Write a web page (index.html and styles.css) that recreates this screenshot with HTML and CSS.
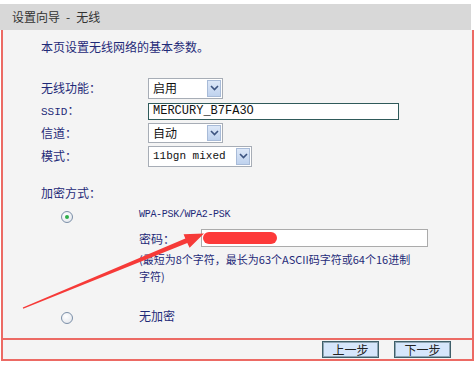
FILE: index.html
```html
<!DOCTYPE html>
<html lang="zh-CN">
<head>
    <meta charset="UTF-8">
    <meta name="viewport" content="width=device-width, initial-scale=1.0">
    <title>设置向导 - 无线</title>
    <link rel="stylesheet" href="styles.css">
</head>
<body>
    <div class="page">
        <div class="title">设置向导&ensp;-&ensp;无线</div>
        <div class="panel">
            <div class="panel-body">
                <p class="intro">本页设置无线网络的基本参数。</p>
                <div class="fields">
                    <div class="field row-a">
                        <label>无线功能：</label>
                        <div class="select sel-short"><span class="val">启用</span><span class="drop"><svg width="9" height="6" viewBox="0 0 9 6"><path d="M1 1 L4.5 4.5 L8 1" fill="none" stroke="#3d5480" stroke-width="1.6"/></svg></span></div>
                    </div>
                    <div class="field row-b">
                        <label><span class="latin">SSID</span>：</label>
                        <div class="text-input mono">MERCURY_B7FA3O</div>
                    </div>
                    <div class="field row-b">
                        <label>信道：</label>
                        <div class="select sel-short sel-low"><span class="val">自动</span><span class="drop"><svg width="9" height="6" viewBox="0 0 9 6"><path d="M1 1 L4.5 4.5 L8 1" fill="none" stroke="#3d5480" stroke-width="1.6"/></svg></span></div>
                    </div>
                    <div class="field row-a">
                        <label>模式：</label>
                        <div class="select sel-long"><span class="val mono small">11bgn mixed</span><span class="drop"><svg width="9" height="6" viewBox="0 0 9 6"><path d="M1 1 L4.5 4.5 L8 1" fill="none" stroke="#3d5480" stroke-width="1.6"/></svg></span></div>
                    </div>
                </div>

                <div class="enc-title">加密方式：</div>

                <div class="option opt-wpa">
                    <span class="radio checked"></span>
                    <div class="option-main">
                        <div class="mode-name">WPA-PSK/WPA2-PSK</div>
                        <div class="pwd-row">
                            <label>密码：</label>
                            <div class="pwd-box"><span class="redact"></span></div>
                        </div>
                        <p class="hint">(最短为8个字符，最长为63个ASCII码字符或64个16进制<br>字符)</p>
                    </div>
                </div>

                <div class="option opt-none">
                    <span class="radio"></span>
                    <div class="option-label">无加密</div>
                </div>
            </div>
            <div class="panel-foot">
                <button class="btn">上一步</button>
                <button class="btn">下一步</button>
            </div>
        </div>

        <!-- red annotation arrow drawn over the form -->
        <svg class="annot" width="476" height="368" viewBox="0 0 476 368">
            <polygon points="22.8,307.5 185.3,238.5 183.6,234.3 204,233.6 189.6,247.8 187.3,243.1 23.2,308.8" fill="#f63a38"/>
        </svg>
    </div>
</body>
</html>
```

FILE: styles.css
```css
body {
    margin: 0;
    padding: 0;
    background: #fff;
    font-family: "Noto Sans CJK SC", "Liberation Sans", sans-serif;
    font-size: 12px;
    color: #1f2a78;
}
.page {
    position: relative;
    width: 476px;
    height: 368px;
    padding-top: 4px;
    box-sizing: border-box;
}
.title {
    width: 459px;
    height: 26px;
    line-height: 25px;
    padding-left: 12px;
    background: #d8d8d8;
    color: #333;
}
.panel {
    width: 469px;
    margin-left: 1px;
    background: #f4f4f4;
    border: 2px solid #ec6a64;
    border-top: none;
}
.panel-body {
    height: 308px;
    padding-left: 38px;
    border-bottom: 2px solid #ec6a64;
}
.intro {
    margin: 0;
    padding-top: 9px;
    line-height: 16px;
}
.fields {
    margin-top: 21px;
}
.field {
    display: flex;
    align-items: center;
}
.row-a {
    height: 24px;
}
.row-b {
    height: 22px;
}
.field label {
    width: 107px;
    line-height: 16px;
}
.latin {
    font-family: "Liberation Mono", monospace;
    font-size: 11px;
}
.mono {
    font-family: "Liberation Mono", monospace;
    color: #111;
}
.select {
    display: flex;
    align-items: stretch;
    height: 21px;
    box-sizing: border-box;
    background: #fff;
    border: 1px solid #a7adb6;
}
.sel-low {
    height: 20px;
}
.sel-short {
    width: 75px;
}
.sel-long {
    width: 104px;
}
.select .val {
    flex: 1;
    padding-left: 4px;
    line-height: 18px;
    color: #111;
}
.select .small {
    font-size: 11px;
}
.drop {
    width: 14px;
    margin: 1px;
    display: flex;
    align-items: center;
    justify-content: center;
    background: linear-gradient(#dde8f8, #bfd2ee);
    border: 1px solid #a8bbd8;
    box-sizing: border-box;
}
.text-input {
    width: 251px;
    height: 17px;
    box-sizing: border-box;
    padding-left: 4px;
    line-height: 15px;
    font-size: 12px;
    background: #fff;
    border: 1px solid #2f5a5a;
}
.enc-title {
    margin-top: 17px;
    line-height: 16px;
}
.option {
    display: grid;
    grid-template-columns: 98px 1fr;
    align-items: start;
}
.opt-wpa {
    margin-top: 7px;
}
.opt-none {
    margin-top: 23px;
}
.radio {
    width: 12px;
    height: 12px;
    margin-left: 20px;
    margin-top: 3px;
    box-sizing: border-box;
    border: 1px solid #7b8fa8;
    border-radius: 50%;
    background: radial-gradient(circle at 40% 35%, #fff, #dfe3ea);
    display: flex;
    align-items: center;
    justify-content: center;
}
.opt-none .radio {
    margin-top: 4px;
}
.radio.checked::after {
    content: "";
    width: 4px;
    height: 4px;
    border-radius: 50%;
    background: #2fae4a;
}
.mode-name {
    font-family: "Liberation Mono", monospace;
    font-size: 10px;
    letter-spacing: -0.3px;
    line-height: 14px;
}
.pwd-row {
    display: flex;
    align-items: center;
    height: 20px;
    margin-top: 6px;
}
.pwd-row label {
    width: 62px;
}
.pwd-box {
    position: relative;
    width: 227px;
    height: 18px;
    box-sizing: border-box;
    background: #fff;
    border: 1px solid #ababab;
}
.redact {
    position: absolute;
    left: 1px;
    top: 2px;
    width: 74px;
    height: 12px;
    border-radius: 7px;
    background: #fd3a3a;
}
.hint {
    margin: 3px 0 0;
    font-size: 11px;
    line-height: 17px;
    white-space: nowrap;
}
.option-label {
    line-height: 16px;
}
.panel-foot {
    height: 19px;
    display: flex;
    justify-content: flex-end;
    align-items: center;
    gap: 15px;
    padding-right: 21px;
}
.btn {
    width: 57px;
    height: 17px;
    padding: 0;
    font-family: "Noto Sans CJK SC", sans-serif;
    font-size: 12px;
    line-height: 13px;
    color: #222;
    background: #d6e6fb;
    border: 1px solid #3f5f6a;
    box-shadow: inset 0 0 0 1px #8fa6b4;
}
.annot {
    position: absolute;
    left: 0;
    top: 0;
    pointer-events: none;
}
```
